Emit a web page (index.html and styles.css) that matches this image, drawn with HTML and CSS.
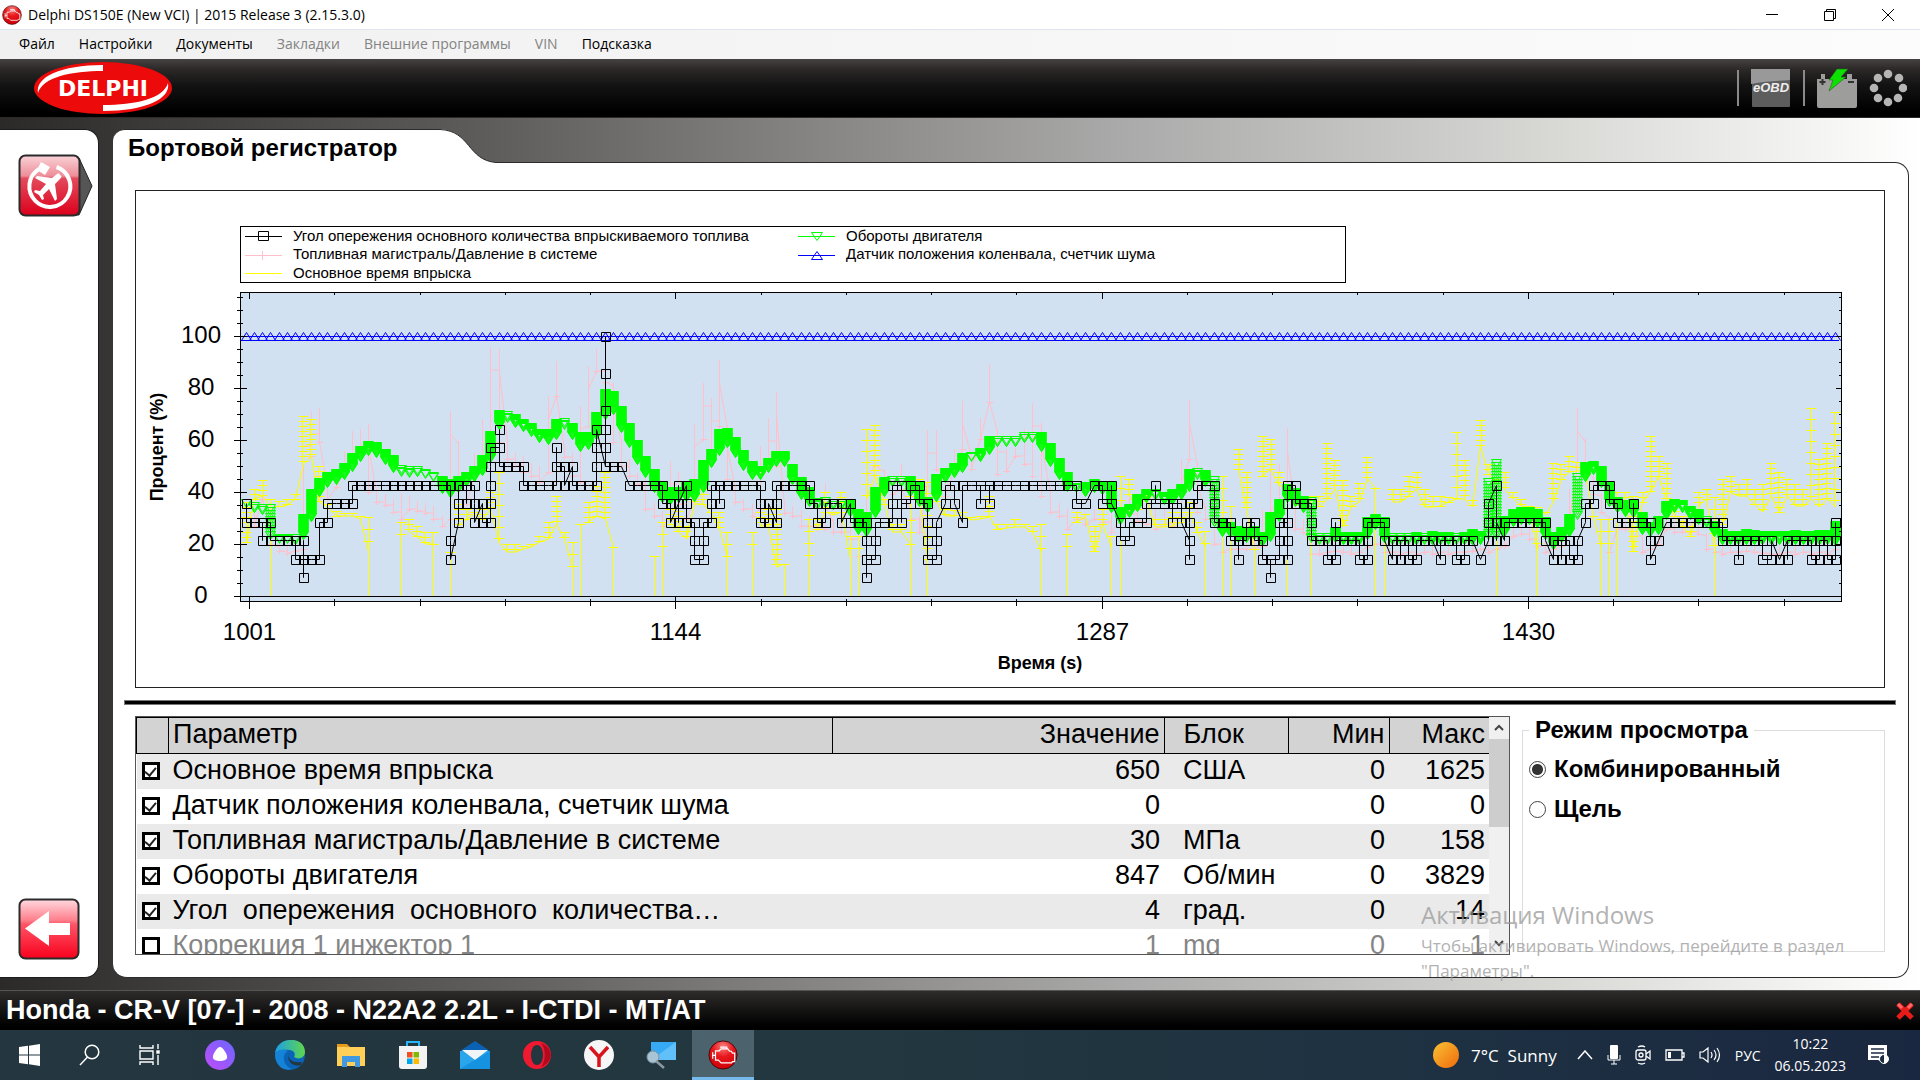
FILE: index.html
```html
<!DOCTYPE html>
<html lang="ru">
<head>
<meta charset="utf-8">
<title>Delphi DS150E (New VCI) | 2015 Release 3 (2.15.3.0)</title>
<link rel="stylesheet" href="styles.css">
</head>
<body>
<svg class="defs" width="0" height="0" aria-hidden="true">
  <defs>
    <radialGradient id="redBall" cx="50%" cy="20%" r="80%"><stop offset="0" stop-color="#f98080"/><stop offset=".45" stop-color="#e8181c"/><stop offset="1" stop-color="#cf0006"/></radialGradient>
    <linearGradient id="redBtn" x1="0" y1="0" x2="0" y2="1"><stop offset="0" stop-color="#f9d3d8"/><stop offset=".34" stop-color="#ee8e99"/><stop offset=".38" stop-color="#e34a5c"/><stop offset="1" stop-color="#dc001c"/></linearGradient>
    <linearGradient id="redBack" x1="0" y1="0" x2="0" y2="1"><stop offset="0" stop-color="#ffd9df"/><stop offset=".35" stop-color="#ff7f8c"/><stop offset=".42" stop-color="#ff5467"/><stop offset="1" stop-color="#f8001c"/></linearGradient>
    <symbol id="engine" viewBox="0 0 32 32">
      <circle cx="16" cy="16" r="15" fill="url(#redBall)" stroke="#3c0a0a"/>
      <path d="M5 13v7M5 16.500h3M8 11.500h4l2-2h7l2 2.500h2l1 2h2.500v9H26l-1 1.500h-11l-3-3H8zM13 7.500h7v2" fill="none" stroke="#fff" stroke-width="1.300"/>
    </symbol>
  </defs>
</svg>

<header class="titlebar">
  <svg class="app-icon" viewBox="0 0 32 32"><use href="#engine"/></svg>
  <span class="window-title">Delphi DS150E (New VCI) | 2015 Release 3 (2.15.3.0)</span>
  <div class="window-buttons">
    <button type="button" aria-label="Свернуть"><svg width="12" height="12"><path d="M0 5.500h12" stroke="#000"/></svg></button>
    <button type="button" aria-label="Восстановить"><svg width="12" height="12"><path d="M.5 2.500h9v9h-9zM2.500 2.500v-2h9v9h-2" fill="none" stroke="#000"/></svg></button>
    <button type="button" aria-label="Закрыть"><svg width="12" height="12"><path d="M0 0l12 12M12 0L0 12" stroke="#000"/></svg></button>
  </div>
</header>

<nav class="menu">
  <a href="#">Файл</a><a href="#">Настройки</a><a href="#">Документы</a><a href="#" class="off">Закладки</a><a href="#" class="off">Внешние программы</a><a href="#" class="off">VIN</a><a href="#">Подсказка</a>
</nav>

<div class="brandbar">
  <svg class="logo" width="140" height="54" viewBox="0 0 140 54" role="img" aria-label="Delphi">
    <ellipse cx="70" cy="27" rx="69" ry="26" fill="#ec0a0a"/>
    <path d="M70 4v6C38 10 10 16 5 32 2 16 28 4 70 4z" fill="#fff"/>
    <path d="M70 50v-6c32 0 60-6 65-22 3 16-23 28-65 28z" fill="#fff"/>
    <text x="70" y="35" class="logo-text">DELPHI</text>
  </svg>
  <div class="status">
    <i class="sep"></i>
    <svg width="42" height="42" viewBox="0 0 42 42"><rect x="2" y="2" width="38" height="38" rx="1" fill="#5d5d5d"/><path d="M1 2h39v11C28 14 14 14 1 17z" fill="#999"/><text x="21" y="25" class="obd-text">eOBD</text></svg>
    <i class="sep"></i>
    <svg class="battery" width="42" height="42" viewBox="0 0 42 42"><path d="M1 12h4V7h4v5h22V7h5v5h5v27q0 2-2 2H3q-2 0-2-2z" fill="#9d9d9b"/><path d="M3.500 15h6M6.500 12v6M32 15h6" stroke="#333" stroke-width="2"/><path d="M21 2h11l-7 8h5L13 24l4-11h-4z" fill="#0ce000" stroke="#2c5a22" stroke-width=".6"/></svg>
    <svg width="38" height="38" viewBox="0 0 38 38" fill="#b5b5b5"><circle cx="19" cy="5" r="4.300"/><circle cx="30" cy="9" r="4.300"/><circle cx="34" cy="19" r="4.300"/><circle cx="29" cy="29" r="4.300"/><circle cx="19" cy="33" r="4.300"/><circle cx="9" cy="29" r="4.300"/><circle cx="5" cy="19" r="4.300"/><circle cx="9" cy="9" r="4.300"/></svg>
  </div>
</div>

<div class="workspace">
  <aside class="side">
    <button type="button" aria-label="Бортовой регистратор">
      <svg width="76" height="64" viewBox="0 0 76 64"><path d="M54 4h7l13 28-13 29h-7z" fill="#555" stroke="#222"/><rect x="1.500" y="1.500" width="60" height="60" rx="6" fill="url(#redBtn)" stroke="#2b2b2b" stroke-width="2"/>
      <path d="M38.500 13A20.500 20.500 0 1 1 21 15" fill="none" stroke="#fff" stroke-width="4"/><path d="M23 8l9 5-5 8-8-5z" fill="#fff"/>
      <path d="M42 21q3 1 0 4l-5 5 2 15-2 2-6-12-6 6 1 4-2 1-3-5-5-3 1-2 5 1 6-7-11-6 2-2 15 2 5-4q2-2 3 1z" fill="#fff"/></svg>
    </button>
    <button type="button" aria-label="Назад">
      <svg width="62" height="62" viewBox="0 0 62 62"><rect x="1.500" y="1.500" width="59" height="59" rx="6" fill="url(#redBack)" stroke="#2b2b2b" stroke-width="2"/><path d="M7 30.500L31 13v12h21v12H31v11z" fill="#fff"/></svg>
    </button>
  </aside>

  <main class="main">
    <div class="tab"><h1>Бортовой регистратор</h1>
      <svg width="56" height="34" viewBox="0 0 56 34"><path d="M0 0C31 2 27 31 56 33.500V34H0z" fill="#fff"/><path d="M0 .5C31 2 27 31 56 33.500" fill="none" stroke="#2b2b2b"/></svg>
    </div>
    <section class="panel">
      <svg id="chart" class="chart" viewBox="135 191 1750 498" role="img" aria-label="График параметров">
        <rect x="135.500" y="191.500" width="1749" height="497" fill="#fff" stroke="#222"/>
        <rect x="240.500" y="227.500" width="1105" height="56" fill="#fff" stroke="#000"/>
        <g fill="none">
          <path d="M245 237.500h37M258.500 232.500h10v9h-10z" stroke="#000"/>
          <path d="M245 256.500h37M262.500 252v9" stroke="#ffc0cb"/>
          <path d="M245 274.500h37" stroke="#ff0"/>
          <path d="M798 237.500h37M811.500 233.500h11l-5.500 8z" stroke="#0f0"/>
          <path d="M798 256.500h37M811.500 260.500h11l-5.500-8z" stroke="#00f"/>
        </g>
        <g class="legend-text">
          <text x="293" y="242">Угол опережения основного количества впрыскиваемого топлива</text>
          <text x="293" y="260">Топливная магистраль/Давление в системе</text>
          <text x="293" y="279">Основное время впрыска</text>
          <text x="846" y="242">Обороты двигателя</text>
          <text x="846" y="260">Датчик положения коленвала, счетчик шума</text>
        </g>
        <rect x="240.500" y="293.500" width="1601" height="309" fill="#d2e1f1" stroke="#000"/>
        <g id="plot" fill="none"></g>
        <g id="labels" class="axis-text"></g>
        <text x="1040" y="670" class="axis-title">Время (s)</text>
        <text transform="translate(163 448) rotate(-90)" class="axis-title">Процент (%)</text>
      </svg>

      <hr>

      <div class="lower">
        <div class="grid-box">
          <table>
            <colgroup><col class="c-check"><col><col class="c-value"><col class="c-unit"><col class="c-min"><col class="c-max"></colgroup>
            <thead><tr><th></th><th>Параметр</th><th class="num">Значение</th><th class="unit">Блок</th><th class="num">Мин</th><th class="num">Макс</th></tr></thead>
            <tbody>
              <tr><td><input type="checkbox" id="p1" checked></td><td><label for="p1">Основное время впрыска</label></td><td class="num">650</td><td class="unit">США</td><td class="num">0</td><td class="num">1625</td></tr>
              <tr><td><input type="checkbox" id="p2" checked></td><td><label for="p2">Датчик положения коленвала, счетчик шума</label></td><td class="num">0</td><td class="unit"></td><td class="num">0</td><td class="num">0</td></tr>
              <tr><td><input type="checkbox" id="p3" checked></td><td><label for="p3">Топливная магистраль/Давление в системе</label></td><td class="num">30</td><td class="unit">МПа</td><td class="num">0</td><td class="num">158</td></tr>
              <tr><td><input type="checkbox" id="p4" checked></td><td><label for="p4">Обороты двигателя</label></td><td class="num">847</td><td class="unit">Об/мин</td><td class="num">0</td><td class="num">3829</td></tr>
              <tr><td><input type="checkbox" id="p5" checked></td><td><label for="p5">Угол&nbsp; опережения&nbsp; основного&nbsp; количества…</label></td><td class="num">4</td><td class="unit">град.</td><td class="num">0</td><td class="num">14</td></tr>
              <tr class="off"><td><input type="checkbox" id="p6"></td><td><label for="p6">Коррекция 1 инжектор 1</label></td><td class="num">1</td><td class="unit">mg</td><td class="num">0</td><td class="num">1</td></tr>
            </tbody>
          </table>
          <div class="scroll">
            <button type="button" aria-label="Вверх"><svg width="10" height="8"><path d="M1 6l4-4 4 4" fill="none" stroke="#444" stroke-width="2"/></svg></button>
            <div class="thumb"></div>
            <button type="button" aria-label="Вниз"><svg width="10" height="8"><path d="M1 2l4 4 4-4" fill="none" stroke="#444" stroke-width="2"/></svg></button>
          </div>
        </div>
        <fieldset>
          <legend>Режим просмотра</legend>
          <label><input type="radio" name="mode" checked>Комбинированный</label>
          <label><input type="radio" name="mode">Щель</label>
        </fieldset>
      </div>
    </section>
  </main>
</div>

<div class="vehicle"><span>Honda - CR-V [07-] - 2008 - N22A2 2.2L - I-CTDI - MT/AT</span>
  <svg width="20" height="20" viewBox="0 0 20 20"><path d="M3 3l14 14M17 3L3 17" stroke="#e81b1b" stroke-width="5"/><path d="M3 3l4 4M17 3l-4 4" stroke="#ff6b6b" stroke-width="3"/></svg>
</div>

<footer class="taskbar">
  <button type="button" aria-label="Пуск"><svg width="22" height="22" viewBox="0 0 22 22" fill="#fff"><path d="M0 3l9-1.200V10.500H0zM10 1.700L21 0v10.500H10zM0 11.500h9v8.700L0 19zM10 11.500h11V22l-11-1.700z"/></svg></button>
  <button type="button" aria-label="Поиск"><svg width="22" height="22" viewBox="0 0 22 22" fill="none" stroke="#fff" stroke-width="1.500"><circle cx="13" cy="8" r="6.800"/><path d="M8.500 13L1 21"/></svg></button>
  <button type="button" aria-label="Представление задач"><svg width="22" height="22" viewBox="0 0 22 22" fill="none" stroke="#fff" stroke-width="1.400"><path d="M1 1v3h13V1M1 7h13v8H1zM1 21v-3h13v3M19 0v5M19 11v10"/><rect x="18" y="7" width="2" height="2" fill="#fff"/></svg></button>
  <button type="button" class="wide" aria-label="Алиса"><svg width="30" height="30" viewBox="0 0 30 30"><defs><linearGradient id="alice" x1="1" y1="0" x2="0" y2="1"><stop offset="0" stop-color="#6a67ff"/><stop offset="1" stop-color="#c04cf8"/></linearGradient></defs><circle cx="15" cy="15" r="15" fill="url(#alice)"/><path d="M15 7c3 0 8 8 7 11-1 4-13 4-14 0-1-3 4-11 7-11z" fill="#fff"/></svg></button>
  <button type="button" aria-label="Edge"><svg width="30" height="30" viewBox="0 0 30 30"><defs><linearGradient id="edgeTop"><stop offset="0" stop-color="#1c9fe8"/><stop offset="1" stop-color="#5fd64b"/></linearGradient></defs><circle cx="15" cy="15" r="15" fill="#0b63b5"/><path d="M0 14C1-4 30-5 30 12c0 6-7 8-11 5 2-3 0-7-5-7C7 9 1 11 0 14z" fill="url(#edgeTop)"/><path d="M0 14c2-5 9-5 13-3-7 3-5 15 4 18C7 32 0 24 0 14z" fill="#1583d8"/><path d="M15 12c-4 4 0 12 12 10l-1 3c-9 3-16-6-11-13z" fill="#24363f"/></svg></button>
  <button type="button" class="app" aria-label="Проводник"><svg width="30" height="26" viewBox="0 0 30 26"><path d="M1 2h10l3 3H1z" fill="#e59b1c"/><path d="M1 5h28v19H1z" fill="#ffcf57"/><path d="M6 25V14h18v11h-5v-5h-8v5z" fill="#3f9ae2"/></svg></button>
  <button type="button" class="app" aria-label="Магазин"><svg width="30" height="30" viewBox="0 0 30 30"><path d="M9 8V2h12v6" fill="none" stroke="#29b6f6" stroke-width="2"/><path d="M1 6h28v20q0 3-3 3H4q-3 0-3-3z" fill="#f3f3f3"/><path d="M9 12h5.500v5.500H9z" fill="#f05021"/><path d="M15.500 12H21v5.500h-5.500z" fill="#7fba00"/><path d="M9 18.500h5.500V24H9z" fill="#00a4ef"/><path d="M15.500 18.500H21V24h-5.500z" fill="#ffb900"/></svg></button>
  <button type="button" class="app" aria-label="Почта"><svg width="30" height="28" viewBox="0 0 30 28"><path d="M0 10L15 0l15 10z" fill="#0b62b4"/><path d="M0 10h30v18H0z" fill="#2aa4ea"/><path d="M2 9h26L15 19z" fill="#f2f5f8"/><path d="M0 28L30 10v18z" fill="#1592e0"/></svg></button>
  <button type="button" class="app" aria-label="Opera"><svg width="30" height="30" viewBox="0 0 30 30"><path fill-rule="evenodd" fill="#f01a30" d="M15 1a14 14 0 1 0 0 28 14 14 0 1 0 0-28zM15 5c4 0 6 5 6 10s-2 10-6 10-6-5-6-10 2-10 6-10z"/><path d="M19 3c13 5 13 19 0 24 5-6 5-18 0-24z" fill="#b3091e"/></svg></button>
  <button type="button" class="app" aria-label="Яндекс"><svg width="30" height="30" viewBox="0 0 30 30"><circle cx="15" cy="15" r="15" fill="#f6f6f6"/><path d="M6 7l9 10 9-10M15 16v11" fill="none" stroke="#d8131b" stroke-width="3.500"/></svg></button>
  <button type="button" class="app" aria-label="Экран"><svg width="30" height="28" viewBox="0 0 30 28"><path d="M5 1h25v18H5z" fill="#37aaf5"/><path d="M5 19L30 1v18z" fill="#61c0fa"/><circle cx="7" cy="16" r="6" fill="#a9c4d4" stroke="#7d93a0"/><path d="M10 20l8 7" stroke="#8c98a0" stroke-width="2.500"/></svg></button>
  <button type="button" class="app active" aria-label="Delphi"><svg width="30" height="30" viewBox="0 0 32 32"><use href="#engine"/></svg></button>

  <div class="tray">
    <svg width="26" height="26" viewBox="0 0 26 26"><defs><linearGradient id="sun" x1="0" y1="0" x2="1" y2="1"><stop offset="0" stop-color="#f8c234"/><stop offset="1" stop-color="#f06a0c"/></linearGradient></defs><circle cx="13" cy="13" r="13" fill="url(#sun)"/></svg>
    <span class="weather">7°C&nbsp; Sunny</span>
    <svg width="16" height="10" viewBox="0 0 16 10" fill="none" stroke="#fff" stroke-width="1.500"><path d="M1 9l7-8 7 8"/></svg>
    <svg width="14" height="20" viewBox="0 0 14 20"><rect x="3" y="0" width="8" height="14" rx="1" fill="#fff"/><path d="M1 10v5h12v-5M7 15v4M4 19h6" fill="none" stroke="#fff"/></svg>
    <svg width="16" height="20" viewBox="0 0 16 20" fill="none" stroke="#fff" stroke-width="1.300"><rect x="1" y="5" width="10" height="10" rx="2"/><circle cx="6" cy="10" r="2"/><path d="M11 9l4-3v8l-4-3M3 2q4-2 7 0M3 18q4 2 7 0"/></svg>
    <svg width="20" height="12" viewBox="0 0 20 12"><path d="M1 1h16v10H1zM17 4h2v4h-2" fill="none" stroke="#fff" stroke-width="1.300"/><path d="M3 3h3v6H3z" fill="#fff"/></svg>
    <svg width="22" height="16" viewBox="0 0 22 16" fill="none" stroke="#fff" stroke-width="1.200"><path d="M1 5h3l5-4v14l-5-4H1zM12 5q2 3 0 6M15 3q4 5 0 10M18 1q5 7 0 14"/></svg>
    <span class="lang">РУС</span>
    <time class="clock">10:22<br>06.05.2023</time>
    <svg class="notes" width="24" height="22" viewBox="0 0 24 22"><path d="M1 1h19v12h-4l1 6-6-3H1z" fill="#fff"/><path d="M4 5h13M4 9h13M4 13h8" stroke="#1c2c42" stroke-width="1.400"/><circle cx="17" cy="15" r="4.500" fill="#1c2c42" stroke="#fff"/><path d="M17 10.500a4.500 4.500 0 0 1 0 9z" fill="#fff"/></svg>
  </div>
</footer>

<div class="watermark"><p>Активация Windows</p><p>Чтобы активировать Windows, перейдите в раздел<br>"Параметры".</p></div>

<script src="chart.js"></script>
</body>
</html>
```
FILE: styles.css
```css
* { box-sizing: border-box; }
body {
  margin: 0;
  min-height: 100vh;
  display: flex;
  flex-direction: column;
  font-family: "Liberation Sans", Arial, sans-serif;
  color: #000;
  background: #fff;
}
button { border: 0; padding: 0; background: none; font: inherit; display: flex; align-items: center; justify-content: center; }
svg { display: block; flex: none; }
.defs { position: absolute; }

.titlebar { height: 30px; display: flex; align-items: center; gap: 6px; padding: 0 3px 0 2px; font: 14px "Open Sans", sans-serif; border-bottom: 1px solid #dde6f0; }
.app-icon { width: 20px; height: 20px; }
.window-buttons { margin-left: auto; display: flex; }
.window-buttons button { width: 58px; height: 28px; }

.menu { height: 29px; display: flex; align-items: center; gap: 24px; padding: 0 0 2px 19px; font: 14px "Open Sans", sans-serif; background: linear-gradient(90deg, #f0f0f0, #fcfcfc); }
.menu a { color: #000; text-decoration: none; }
.menu a.off { color: #838383; }

.brandbar { height: 59px; display: flex; align-items: center; justify-content: space-between; padding: 0 13px 0 33px; background: linear-gradient(#454241, #2b2827 18%, #141313 45%, #000 90%); border-bottom: 1px solid #2c2a29; }
.logo-text { font: bold 22px "DejaVu Sans", sans-serif; fill: #fff; text-anchor: middle; }
.obd-text { font: italic bold 13px "Liberation Sans", sans-serif; fill: #eee; text-anchor: middle; }
.status { display: flex; align-items: center; gap: 11px; }
.sep { width: 2px; height: 36px; background: #8a8a8a; }

.workspace { flex: 1; display: flex; gap: 14px; padding: 11px 11px 12px 0; background: linear-gradient(90deg, #2b2a29, #5f5e5c 26%, #888684 43%, #ababab 59%, #d8d8d5 81%, #fff); border-bottom: 1px solid #555; }
.side { width: 99px; flex: none; display: flex; flex-direction: column; justify-content: space-between; align-items: flex-start; padding: 24px 0 17px 18px; background: #fff; border: 1px solid #1c1c1c; border-left: 0; border-radius: 0 14px 14px 0; }
.main { flex: 1; min-width: 0; display: flex; flex-direction: column; }
.tab { display: flex; height: 34px; margin-bottom: -1px; position: relative; }
.tab h1 { margin: 0; width: 327px; padding-left: 15px; border-top: 1px solid #2b2b2b; border-radius: 12px 0 0 0; background: #fff; font-size: 24px; line-height: 36px; white-space: nowrap; }
.panel { flex: 1; background: #fff; border: 1px solid #2b2b2b; border-left: 0; border-radius: 0 14px 14px 14px; padding: 27px 23px 22px 22px; }
.chart { width: 100%; height: auto; }
.legend-text { font-size: 15px; }
.axis-text { font-size: 24px; text-anchor: middle; }
.axis-title { font-size: 18px; font-weight: bold; text-anchor: middle; }
hr { height: 5px; margin: 12px -11px 11px; border: 1px solid #777; background: #000; }

.lower { display: grid; grid-template-columns: 1fr 363px; gap: 12px; }
.grid-box { display: flex; height: 239px; overflow: hidden; border: 1px solid #555; }
table { flex: 1; table-layout: fixed; width: 0; height: 246px; border-collapse: collapse; font-size: 27px; line-height: 30px; }
.c-check { width: 32px; }
.c-value { width: 332px; }
.c-unit { width: 124px; }
.c-min { width: 101px; }
.c-max { width: 100px; }
th { height: 36px; padding: 0 4px 4px; text-align: left; font-weight: normal; background: #d3d3d3; border: 1px solid #000; }
td { height: 35px; padding: 0 4px 3px; white-space: nowrap; }
th:last-child { border-right: 0; }
tbody tr:nth-child(odd) { background: #eaeaea; }
td.num, th.num { text-align: right; }
td.unit, th.unit { padding-left: 19px; }
tr.off { color: #858585; }
td input { display: block; appearance: none; width: 18px; height: 18px; margin: 3px 0 0 1px; border: 3px solid #000; background: #fff; }
td input:checked::before { content: ""; display: block; width: 5px; height: 9px; margin: 0 auto; border: solid #222; border-width: 0 2px 2px 0; transform: rotate(40deg); }
.scroll { width: 20px; display: flex; flex-direction: column; background: #f0f0f0; }
.scroll button { height: 22px; }
.thumb { height: 88px; margin-bottom: auto; background: #cdcdcd; }

fieldset { margin: 0 0 3px; padding: 5px 6px; border: 1px solid #dcdcdc; font-size: 24px; font-weight: bold; }
legend { padding: 0 6px; line-height: 28px; }
fieldset label { display: flex; align-items: center; gap: 8px; height: 40px; }
fieldset input { appearance: none; width: 17px; height: 17px; margin: 0; border: 1px solid #444; border-radius: 50%; background: #fff; }
fieldset input:checked { background: radial-gradient(circle, #333 0 5px, #fff 6px); }

.vehicle { height: 39px; display: flex; align-items: center; justify-content: space-between; padding: 0 5px 0 6px; background: linear-gradient(#2e2c2b, #000 90%); color: #fff; font-size: 27px; font-weight: bold; }

.taskbar { height: 50px; display: flex; color: #fff; font-family: "Open Sans", sans-serif; background: linear-gradient(90deg, #24363f, #22373f 45%, #1e3142 75%, #1a2740); }
.taskbar button { width: 60px; }
.taskbar button.wide { width: 80px; }
.taskbar button.app { width: 62px; }
.taskbar button.active { background: #4c626d; border-bottom: 3px solid #76b9ed; padding-top: 3px; }
.tray { margin-left: auto; display: flex; align-items: center; gap: 14px; padding-right: 29px; font-size: 14px; }
.weather { font-size: 17px; margin: 0 6px 0 -2px; }
.clock { text-align: center; line-height: 22px; font-size: 14px; }
.notes { margin-left: 7px; }

.watermark { position: absolute; right: 68px; bottom: 97px; width: 431px; color: #999; opacity: .75; font-family: "Open Sans", sans-serif; pointer-events: none; }
.watermark p { margin: 0; font-size: 17px; line-height: 25px; white-space: nowrap; }
.watermark p:first-child { font-size: 24px; line-height: 36px; }
```
FILE: chart.js
```js
const NS = "http://www.w3.org/2000/svg";
const plot = document.getElementById("plot");
const labels = document.getElementById("labels");

// Sample index -> horizontal position; the logging interval varies a little over the recording.
const anchors = [[0, 246], [47, 629], [76, 866], [112, 1181], [128, 1311], [193, 1835]];
function sx(k) {
  let i = 0;
  while (i < anchors.length - 2 && k > anchors[i + 1][0]) i++;
  const [k0, x0] = anchors[i], [k1, x1] = anchors[i + 1];
  return Math.round(x0 + (x1 - x0) * (k - k0) / (k1 - k0)) + 0.5;
}
const zero = 597.5;
function draw(d, stroke) {
  const p = document.createElementNS(NS, "path");
  p.setAttribute("d", d);
  p.setAttribute("stroke", stroke);
  plot.append(p);
}
function label(x, y, s) {
  const t = document.createElementNS(NS, "text");
  t.setAttribute("x", x);
  t.setAttribute("y", y);
  t.textContent = s;
  labels.append(t);
}
// "hi-lo" extents per sample; "x" marks no sample, a "z" suffix a drop to zero.
function ranges(text) {
  return text.trim().split(/\s+/).map(s => {
    if (s === "x") return null;
    const z = s.endsWith("z");
    const [a, b] = s.replace("z", "").split("-").map(Number);
    return { a, b, z };
  });
}

const pressure = ranges(`
x 515-527 490-500 530-545 548-552 550-554 548-552 427-550 415-457 412-443 488-500 480-488 455-470 435-460 433-447 428-493
493-503 498-506 503-513 497-520 500-510 505-512 507-514 510-520 520-527 415-520 445-483 480-505 457-477 423-457 351-457 353-443
443-460 457-467 460-473 467-477 470-483 400-473 365-397 450-458 457-477 410-483 370-427 353-372 353-383 387-443 443-467 463-477
477-485 483-510 507-517 515-527 465-520 476-505 505-520 428-500 387-440 402-460 364-427 430-480 490-503 503-510 508-517 450-510
422-470 396-467 507-514 510-517 514-527 520-527 523-530 487-530 523-533 523-533 525-540 513-557 457-523 430-467 473-480 485-495
468-490 510-520 520-533 434-487 434-470 480-497 453-470 405-450 457-470 422-440 368-403 433-475 453-472 452-457 433-465 407-477
427-497 493-513 507-517 513-530 515-520 517-525 513-520 515-523 513-533 510-520 497-515 510-522 513-525 513-530 513-525 513-527
463-513 404-460 467-513 510-520 513-545 543-553 545-550 545-550 543-550 540-550 513-547 473-513 468-500 432-523 513-530 523-533
545-555 545-555 546-553 546-552 545-553 546-555 545-553 540-548 535-545 545-553 546-553 545-555 545-553 545-555 545-553 545-555
545-553 545-555 546-553 545-553 545-552 545-550 540-553 540-550 537-547 530-537 527-535 530-540 533-547 540-553 545-550 540-547
493-520 412-467 443-467 480-495 497-513 520-553 520-530 525-530 523-537 537-553 543-550 530-545 523-530 525-533 525-533 525-533
527-535 537-550 543-553 547-555 547-553 547-553 546-552 547-553 547-554 547-555 546-555 547-553 546-555 547-553 546-555 547-553
547-555 540-550`);

const injection = ranges(`
503-544 490-500 481-497 500-508z 502-508 500-506 495-500 417-465 420-457 467-503 505-508 512-517 514-517 514-517 517-520 518-553z
x x x 523-543z 520-533 527-538 533-545 533-545z x 553-553z 500-527 510-520 513-515 510-520 493-510 473-544
545-553 545-553 547-550 545-548 537-543 523-540 497-525 533-540 543-568z 525-525z 503-523 487-517 473-520 548-548z x x
x x 557-557z 523-548z 510-525 512-533 527-540 487-505 490-505 513-515 513-530 533-557z x x 533-548z 513-527
510-527 510-568 565-565z x x 520-557z 520-530 493-513 513-516 493-513 537-560z 537-553z 430-500 426-477 500-505 525-533
525-533 497-545z 480-500 483-560z 497-503 510-517 511-517 513-516 518-521 517-520 497-518 525-530 525-529 520-528 525-528 527-533
525-553z x x 535-557z 513-523 515-518 527-553 510-525 537-548z 477-513z 480-497 495-510 493-500 520-528 520-528 513-527
513-523 503-513 523-533 532-548z x 477-513z 507-517z 450-470 473-510 550-550z 437-477 440-470 473-487 487-487z 493-507 497-503
497-510z 497-508 444-500 461-490 481-528 497-507 484-503 458-480 489-489z 520-520z 490-503 490-503 477-497 473-490 490-508 497-508
497-507 498-503 433-500 461-500 501-508 421-447 465-475 480-485z 473-490 493-500 500-507 507-509 508-553z 513-516 464-503 465-480
457-473 463-472 470-472 517-519 520-548z 520-553z 493-500z 493-500 497-553 493-503 437-493 457-477 464-500 507-517 517-527 527-537
493-507 490-500 498-548z 480-527 477-493 485-497 480-497 490-505 485-513 464-497 473-513 480-497 485-507 490-507 409-500 460-508
444-500 413-508`);

const rpm = ranges(`
500-508 503-513 505-515 505-540 535-544 535-544 535-545 515-540 490-522 479-497 473-488 470-485 464-480 454-472 447-462 442-456
443-458 450-465 456-473 466-477 467-478 467-477 470-479 473-482 477-494 480-498 477-493 473-487 467-482 456-476 432-463 411-430
412-423 415-428 420-432 424-437 430-443 430-445 420-440 419-430 424-440 433-452 433-450 413-440 390-420 392-415 407-433 424-448
441-465 457-478 470-493 482-503 488-505 488-503 482-502 480-502 461-493 450-468 430-456 429-448 438-458 451-471 462-480 467-480
459-473 452-467 452-467 465-485 478-500 488-507 499-510 498-508 500-510 500-510 500-517 510-535 513-537 488-518 478-497 477-487
477-487 477-497 482-507 498-513 475-502 469-483 464-478 454-473 453-462 449-462 437-455 437-447 437-447 437-447 433-443 433-443
433-452 444-467 459-480 473-492 482-493 483-497 480-493 482-495 483-513 508-525 505-518 495-512 490-503 490-500 493-505 490-505
485-500 470-492 469-480 471-487 477-527 520-537 523-538 527-543 528-543 527-540 533-547 513-542 500-522 485-503 489-507 497-513
498-543 534-545 534-545 528-543 533-545 533-545 533-545 518-540 515-530 518-543 534-545 534-545 534-545 533-545 534-545 532-545
533-545 533-545 534-545 533-545 530-545 532-545 479-540 460-540 517-537 510-527 508-525 508-525 510-528 518-540 533-550 528-543
515-537 474-520 463-482 462-475 467-488 483-507 498-513 501-517 500-518 513-535 523-537 517-535 502-520 500-513 501-513 507-520
510-525 517-528 522-537 530-545 532-545 532-545 530-545 531-545 532-545 532-545 532-545 532-545 531-545 532-545 532-545 531-545
531-545 522-546`);

// Injection advance, in whole degrees (hex digit) visited at each sample; 14 degrees is 100 %.
const advance = `
54 4 434 43 3 3 32 2312 2 24 45 5 5 56 6 6 6 6 6 6 6 6 6 6 6 632 456 656 654 54 45678 8987 7 7 76 6 6 6 6787 76 76 6
6 6789 789ace987 7 7 6 6 6 6 65 54 5645 654 432 234 456 656 6 6 6 6 654 45 456 6 6 6 65 54 45 5 54 54 4 43212 234 4 456
6545 56 65 5432 234 56 65 46 6 656 656 6 6 6 6 6 6 6 6 6 65 5 6 65 565 43 34 4 45 565 5 545 54 32345 56 6 654 4 43 323
34 43 32 212 234 423456 65 5 543 3 32 2343 3 3 32 234 4 43 23 323 32 23 3 3 23 3 32 23 3 2 345 634 34 4 4 4 4 43 23
323 32 23 45 56 6 65 54 4 454 4 432 3 4 4 4 4 4 4 4 43 3 323 3 3 32 23 2 323 3 3 32 23 32 234`.trim().split(/\s+/);

function pressurePath() {
  let d = "", prev = null;
  pressure.forEach((r, k) => {
    if (!r) { prev = null; return; }
    const x = sx(k);
    if (prev !== null) d += `M${sx(k - 1)} ${prev}L${x} ${Math.min(r.b, Math.max(r.a, prev))}`;
    d += `M${x} ${r.a - 3}V${r.b + 3}M${x - 3} ${r.b + 0.5}h7`;
    prev = r.b - r.a > 40 ? r.a + 20 : r.b;
  });
  return d;
}
function injectionPath() {
  let d = "", prev = null;
  injection.forEach((r, k) => {
    if (!r) { prev = null; return; }
    const x = sx(k);
    if (prev !== null) d += `M${sx(k - 1)} ${prev}L${x} ${r.b}`;
    d += `M${x} ${r.a}V${r.z ? zero : r.b}`;
    const step = r.b - r.a > 60 ? 11 : r.z ? 12 : 5;
    for (let y = r.a; y <= r.b; y += step) d += `M${x - 5} ${y + 0.5}h10`;
    prev = r.z ? null : r.b;
  });
  return d;
}
function rpmPath() {
  let d = "";
  rpm.forEach((r, k) => {
    const x = sx(k), h = r.b - r.a;
    const last = Math.max(r.a, r.b - 8);
    const step = h > 34 ? 3 : h > 11 ? 1 : 2;
    for (let y = r.a; y <= last; y += step) d += `M${x - 5} ${y + 0.5}h10l-5 8z`;
    d += `M${x - 5} ${last + 0.5}h10l-5 8z`;
  });
  return d;
}
function advancePath() {
  let line = "", marks = "";
  advance.forEach((s, k) => {
    for (const c of s) {
      const x = sx(k), y = Math.round(597 - parseInt(c, 16) * 18.57) + 0.5;
      line += (line ? "L" : "M") + x + " " + y;
      marks += `M${x - 4} ${y - 4}h9v9h-9z`;
    }
  });
  return line + marks;
}

let triangles = "";
for (let k = 0; k <= 193; k++) triangles += `M${sx(k) - 5} 341.500l5-8l5 8`;
draw(pressurePath(), "#ffc0cb");
draw(injectionPath(), "#ffff00");
draw(`M241 341.500H1839M241 337.500H1839${triangles}`, "#0000ff");
draw(rpmPath(), "#00ff00");
draw(advancePath(), "#000");

let axes = `M236 ${zero}H1841`;
for (let v = 0; v <= 115; v += 5) {
  const y = Math.round(597 - v * 2.6) + 0.5, major = v % 20 === 0;
  axes += major ? `M234 ${y}h13M1836 ${y}h6` : `M237 ${y}h6M1839 ${y}h3`;
  if (major) label(201, y + 6, v);
}
for (let i = 0; i <= 18; i++) {
  const x = Math.round(249 + i * 85.25) + 0.5, major = i % 5 === 0;
  axes += major ? `M${x} 294v6M${x} 597v13` : `M${x} 294v2M${x} 600v7`;
  if (major) label(x, 641, 1001 + i / 5 * 143);
}
draw(axes, "#000");
```
